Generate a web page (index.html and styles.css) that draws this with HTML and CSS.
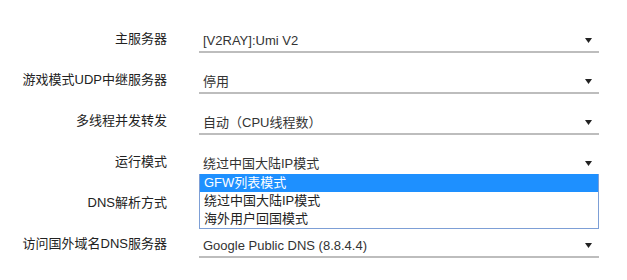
FILE: index.html
```html
<!DOCTYPE html>
<html lang="zh-CN">
<head>
<meta charset="utf-8">
<title>设置</title>
<link rel="stylesheet" href="styles.css">
</head>
<body>
<form class="form">
  <label class="label">主服务器</label>
  <div class="select"><span class="value">[V2RAY]:Umi V2</span><svg class="arrow" width="7" height="5" viewBox="0 0 7 5"><path d="M0 0H7L3.5 5Z"/></svg></div>

  <label class="label">游戏模式UDP中继服务器</label>
  <div class="select"><span class="value">停用</span><svg class="arrow" width="7" height="5" viewBox="0 0 7 5"><path d="M0 0H7L3.5 5Z"/></svg></div>

  <label class="label">多线程并发转发</label>
  <div class="select"><span class="value">自动（CPU线程数）</span><svg class="arrow" width="7" height="5" viewBox="0 0 7 5"><path d="M0 0H7L3.5 5Z"/></svg></div>

  <label class="label">运行模式</label>
  <div class="select focused"><span class="value">绕过中国大陆IP模式</span><svg class="arrow" width="7" height="5" viewBox="0 0 7 5"><path d="M0 0H7L3.5 5Z"/></svg>
    <ul class="dropdown">
      <li class="option selected">GFW列表模式</li>
      <li class="option">绕过中国大陆IP模式</li>
      <li class="option">海外用户回国模式</li>
    </ul>
  </div>

  <label class="label">DNS解析方式</label>
  <div class="select"><span class="value"></span><svg class="arrow" width="7" height="5" viewBox="0 0 7 5"><path d="M0 0H7L3.5 5Z"/></svg></div>

  <label class="label">访问国外域名DNS服务器</label>
  <div class="select"><span class="value">Google Public DNS (8.8.4.4)</span><svg class="arrow" width="7" height="5" viewBox="0 0 7 5"><path d="M0 0H7L3.5 5Z"/></svg></div>
</form>
</body>
</html>
```

FILE: styles.css
```css
html, body {
  margin: 0;
  padding: 0;
  background: #ffffff;
}

body {
  font-family: "Liberation Sans", "Noto Sans CJK SC", Arial, sans-serif;
  font-size: 13px;
  color: #333333;
  width: 627px;
  height: 280px;
  overflow: hidden;
}

.form {
  display: grid;
  grid-template-columns: 167px 400px;
  grid-auto-rows: 41px;
  column-gap: 32px;
  padding-top: 12px;
}

.label {
  align-self: end;
  text-align: right;
  line-height: 18px;
  padding-bottom: 5px;
  color: #222222;
  white-space: nowrap;
}

.select {
  position: relative;
  box-sizing: border-box;
  height: 41px;
  padding: 20px 7px 0 4px;
  border-bottom: 2px solid #bdbdbd;
  display: flex;
  align-items: flex-start;
  line-height: 18px;
}

.select.focused {
  border-bottom-color: #1a9bcb;
}

.value {
  flex: 1;
  white-space: nowrap;
  color: #333333;
}

.arrow {
  margin-top: 6px;
  fill: #222222;
  flex: none;
}

.dropdown {
  position: absolute;
  left: 0;
  right: 0;
  top: 100%;
  margin: 0;
  padding: 0;
  list-style: none;
  background: #ffffff;
  border: 1px solid #7d9fd6;
  border-top: none;
  z-index: 2;
}

.option {
  height: 18px;
  line-height: 18px;
  padding-left: 4px;
  color: #222222;
  white-space: nowrap;
}

.option.selected {
  background: #1e90ff;
  color: #ffffff;
}
```
